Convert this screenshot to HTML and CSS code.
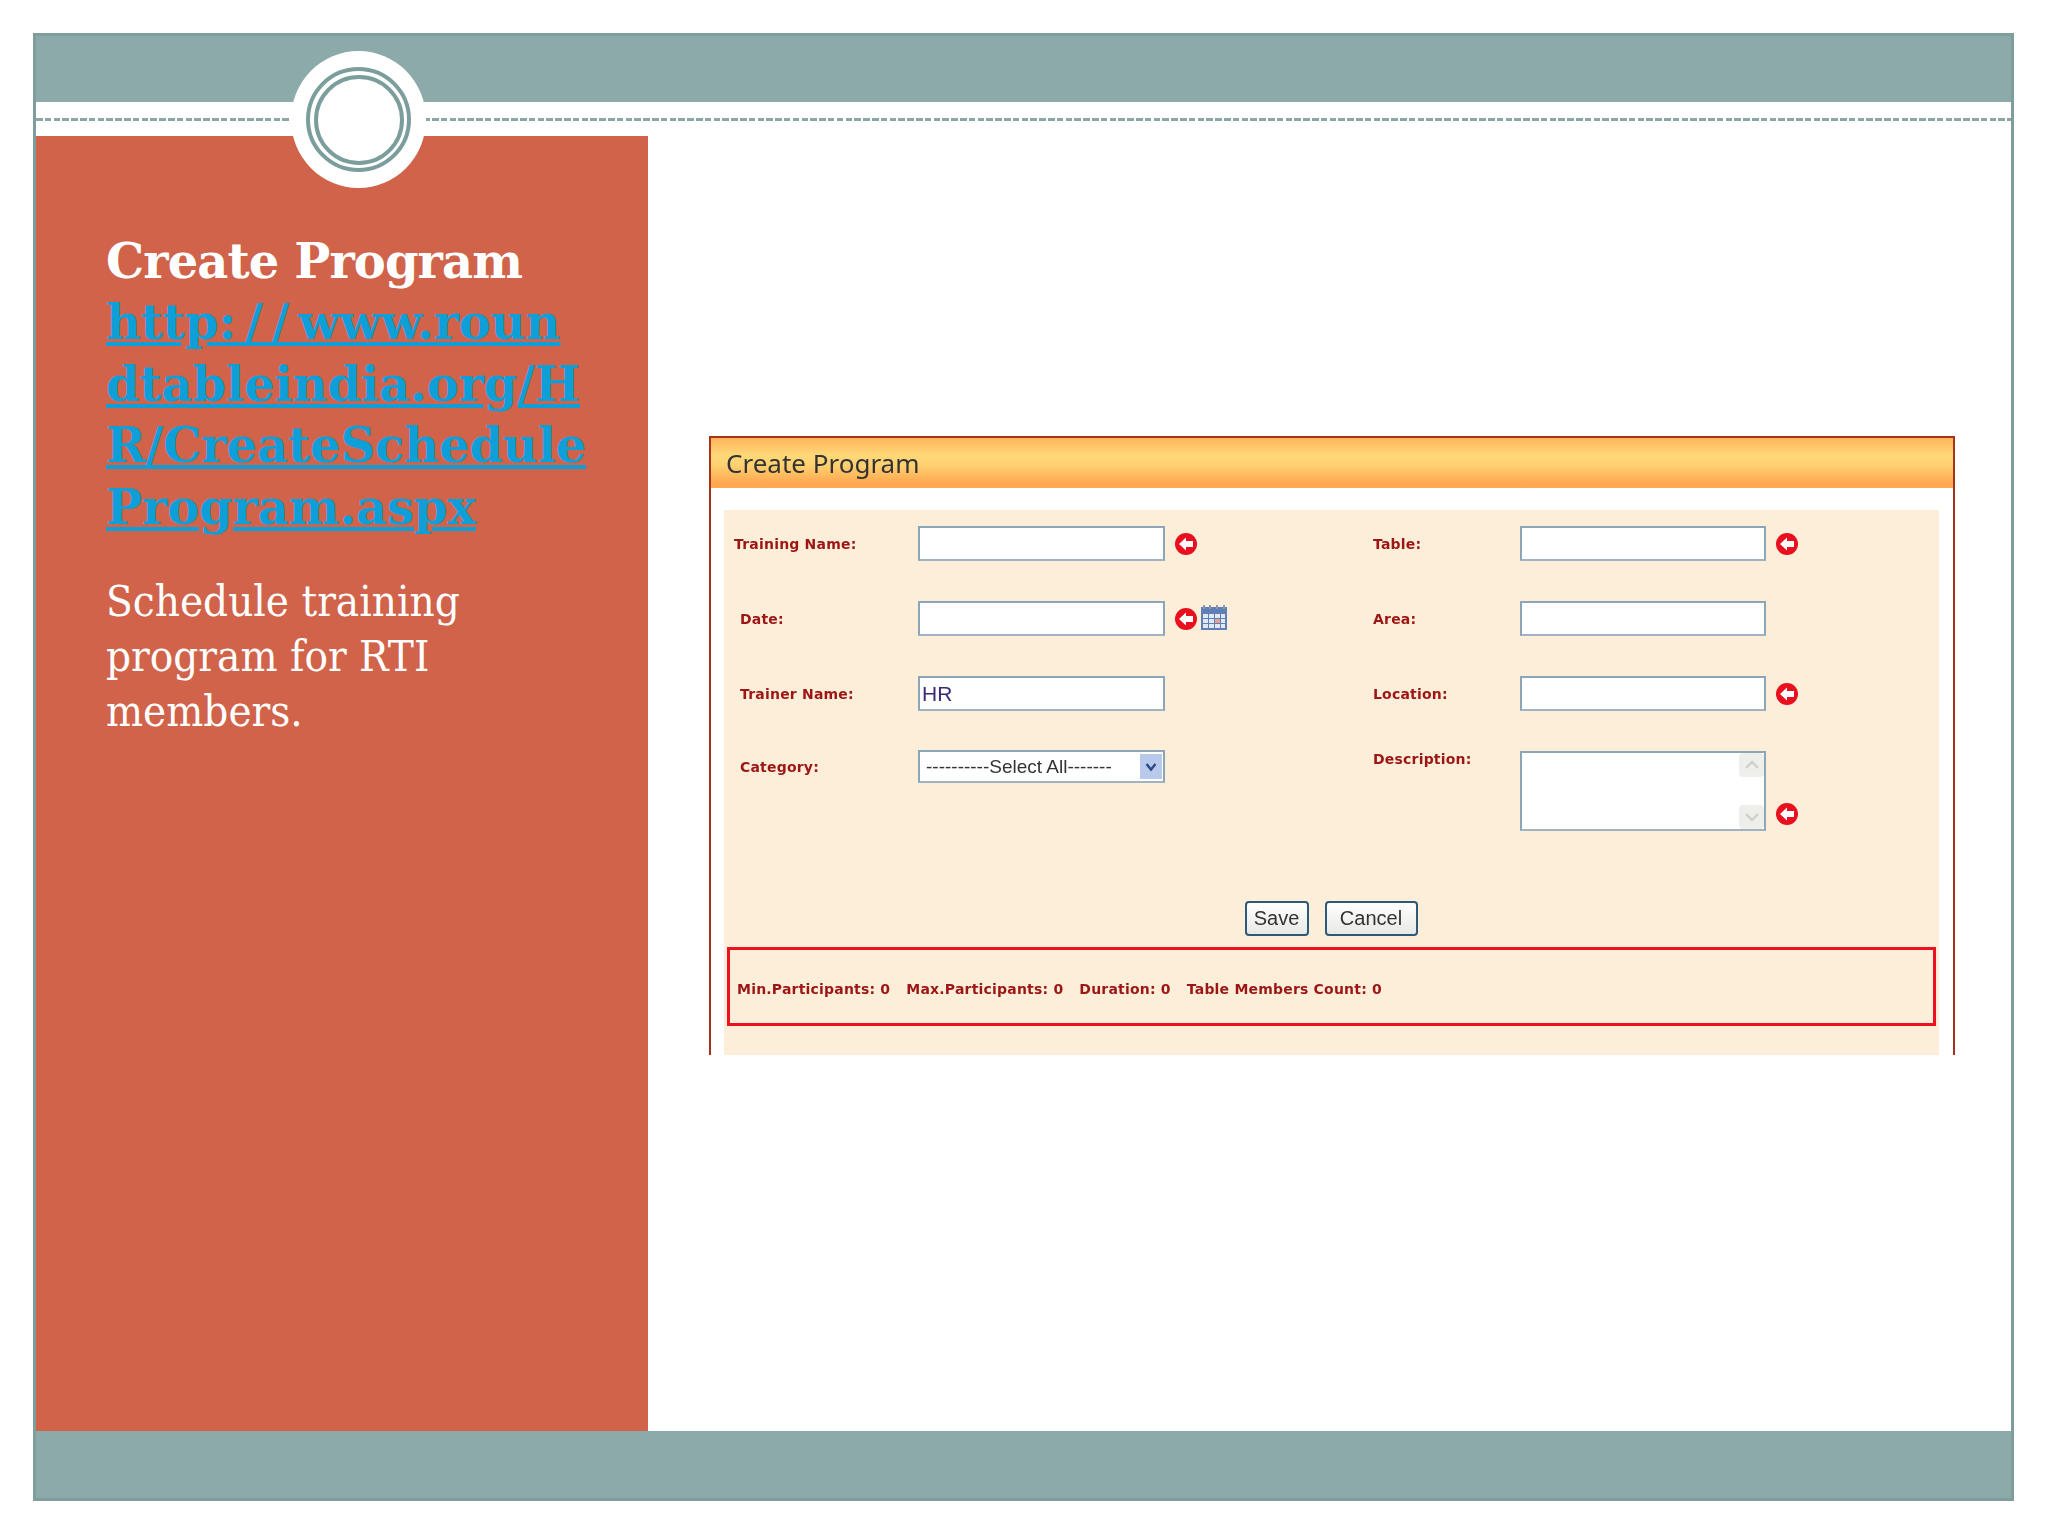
FILE: index.html
```html
<!DOCTYPE html>
<html lang="en">
<head>
    <meta charset="UTF-8">
    <title>Create Program</title>
    <link rel="stylesheet" href="styles.css">
</head>
<body>
    <div class="slide">
        <div class="top-bar"></div>
        <div class="dash-band"><div class="dash-line"></div></div>

        <div class="ring-badge">
            <div class="ring-outer"><div class="ring-inner"></div></div>
        </div>

        <div class="main">
            <div class="side">
                <h1 class="side-title">Create Program<br>
                    <a class="side-link" href="#">http<span class="link-slashes">://</span>www.roun<br>dtableindia.org/H<br>R/CreateSchedule<br>Program.aspx</a>
                </h1>
                <p class="side-text">Schedule training<br>program for RTI<br>members.</p>
            </div>

            <div class="content">
                <div class="panel">
                    <div class="panel-header">Create Program</div>
                    <div class="panel-body">
                        <div class="form-grid">
                            <div class="label wide">Training Name:</div>
                            <div class="field"></div>
                            <div class="marks"><svg class="req-icon" viewBox="0 0 22 22"><use href="#req"/></svg></div>
                            <div class="label">Table:</div>
                            <div class="field"></div>
                            <div class="marks"><svg class="req-icon" viewBox="0 0 22 22"><use href="#req"/></svg></div>

                            <div class="label inset">Date:</div>
                            <div class="field"></div>
                            <div class="marks">
                                <svg class="req-icon" viewBox="0 0 22 22"><use href="#req"/></svg>
                                <svg class="cal-icon" viewBox="0 0 26 25">
                                    <rect x="0" y="2" width="26" height="23" fill="#5f7fb5"/>
                                    <rect x="2" y="0" width="2" height="4" fill="#8a99ad"/>
                                    <rect x="8" y="0" width="2" height="4" fill="#8a99ad"/>
                                    <rect x="15" y="0" width="2" height="4" fill="#8a99ad"/>
                                    <rect x="22" y="0" width="2" height="4" fill="#8a99ad"/>
                                    <rect x="2" y="9" width="5" height="4" fill="#dfe8f5"/>
                                    <rect x="8" y="9" width="5" height="4" fill="#dfe8f5"/>
                                    <rect x="14" y="9" width="5" height="4" fill="#dfe8f5"/>
                                    <rect x="20" y="9" width="4" height="4" fill="#dfe8f5"/>
                                    <rect x="2" y="14" width="5" height="4" fill="#dfe8f5"/>
                                    <rect x="8" y="14" width="5" height="4" fill="#dfe8f5"/>
                                    <rect x="14" y="14" width="5" height="4" fill="#e9a08c"/>
                                    <rect x="20" y="14" width="4" height="4" fill="#dfe8f5"/>
                                    <rect x="2" y="19" width="5" height="4" fill="#dfe8f5"/>
                                    <rect x="8" y="19" width="5" height="4" fill="#dfe8f5"/>
                                    <rect x="14" y="19" width="5" height="4" fill="#dfe8f5"/>
                                    <rect x="20" y="19" width="4" height="4" fill="#dfe8f5"/>
                                </svg>
                            </div>
                            <div class="label">Area:</div>
                            <div class="field"></div>
                            <div class="marks"></div>

                            <div class="label inset">Trainer Name:</div>
                            <div class="field field-value">HR</div>
                            <div class="marks"></div>
                            <div class="label">Location:</div>
                            <div class="field"></div>
                            <div class="marks"><svg class="req-icon" viewBox="0 0 22 22"><use href="#req"/></svg></div>

                            <div class="label inset label-category">Category:</div>
                            <div class="field select-box">
                                <span class="select-text">----------Select All-------</span>
                                <span class="select-arrow">
                                    <svg viewBox="0 0 12 10" width="12" height="10"><path d="M1.5 2 L6 7.5 L10.5 2" fill="none" stroke="#2c4a86" stroke-width="2.4"/></svg>
                                </span>
                            </div>
                            <div class="marks"></div>
                            <div class="label label-top">Description:</div>
                            <div class="field text-area">
                                <div class="scroll-bar">
                                    <span class="scroll-btn">
                                        <svg viewBox="0 0 16 10" width="16" height="10"><path d="M2 8 L8 2 L14 8" fill="none" stroke="#cfd0c8" stroke-width="2.4"/></svg>
                                    </span>
                                    <span class="scroll-btn">
                                        <svg viewBox="0 0 16 10" width="16" height="10"><path d="M2 2 L8 8 L14 2" fill="none" stroke="#cfd0c8" stroke-width="2.4"/></svg>
                                    </span>
                                </div>
                            </div>
                            <div class="marks marks-end"><svg class="req-icon" viewBox="0 0 22 22"><use href="#req"/></svg></div>
                        </div>

                        <div class="buttons">
                            <button class="btn btn-save">Save</button>
                            <button class="btn btn-cancel">Cancel</button>
                        </div>

                        <div class="summary">
                            <span>Min.Participants: 0</span>
                            <span>Max.Participants: 0</span>
                            <span>Duration: 0</span>
                            <span>Table Members Count: 0</span>
                        </div>
                    </div>
                </div>
            </div>
        </div>

        <div class="bottom-bar"></div>
    </div>

    <svg class="icon-defs" width="0" height="0">
        <symbol id="req" viewBox="0 0 22 22">
            <circle cx="11" cy="11" r="11" fill="#e8101f"/>
            <path d="M4 11 L11 4.5 L11 8 L18 8 L18 14 L11 14 L11 17.5 Z" fill="#fff"/>
        </symbol>
    </svg>
</body>
</html>
```

FILE: styles.css
```css
* {
    margin: 0;
    padding: 0;
    box-sizing: border-box;
}

body {
    background-color: #fff;
    width: 2048px;
    height: 1536px;
    padding: 33px 34px 35px 33px;
    font-family: "Liberation Sans", Arial, sans-serif;
    overflow: hidden;
}

.slide {
    position: relative;
    height: 100%;
    display: flex;
    flex-direction: column;
    border: 3px solid #7f9d9c;
}

.top-bar {
    height: 66px;
    background-color: #8caaa9;
}

.bottom-bar {
    height: 67px;
    background-color: #8caaa9;
}

.dash-band {
    height: 34px;
    padding-top: 16px;
}

.dash-line {
    height: 3px;
    background-image: repeating-linear-gradient(to right, #8aa5a4 0, #8aa5a4 6.5px, transparent 6.5px, transparent 8.8px);
}

/* circle sits over the bars */
.ring-badge {
    position: absolute;
    left: 255px;
    top: 15px;
    width: 135px;
    height: 137px;
    border-radius: 50%;
    background-color: #fff;
    display: flex;
    align-items: center;
    justify-content: center;
}

.ring-outer {
    width: 105px;
    height: 105px;
    border-radius: 50%;
    border: 4px solid #7b9e9c;
    display: flex;
    align-items: center;
    justify-content: center;
}

.ring-inner {
    width: 90px;
    height: 90px;
    border-radius: 50%;
    border: 4px solid #7b9e9c;
}

.main {
    flex: 1;
    display: flex;
}

.side {
    width: 612px;
    background-color: #d0634a;
    padding: 95px 20px 0 70px;
    color: #fff;
    font-family: "DejaVu Serif", "Liberation Serif", serif;
}

.side-title {
    font-size: 48px;
    line-height: 61.4px;
    font-weight: bold;
    letter-spacing: -0.9px;
}

.side-link {
    color: #0f9fd8;
    letter-spacing: -0.1px;
}

.link-slashes {
    letter-spacing: 9px;
}

.side-text {
    margin-top: 36px;
    font-size: 43.5px;
    font-stretch: condensed;
    line-height: 55px;
}

.content {
    flex: 1;
    padding: 300px 0 0 61px;
}

.panel {
    width: 1246px;
    height: 619px;
    display: flex;
    flex-direction: column;
    border-left: 2px solid #a8331a;
    border-right: 2px solid #a8331a;
    border-top: 2px solid #a8331a;
    filter: blur(0.5px);
}

.panel-header {
    height: 50px;
    padding-left: 15px;
    display: flex;
    align-items: center;
    font-family: "Noto Sans", sans-serif;
    font-size: 26px;
    color: #333;
    background: linear-gradient(to bottom, #ffb45c 0%, #ffd878 35%, #ffd070 55%, #ffa850 90%, #ffa850 100%);
}

.panel-body {
    flex: 1;
    margin: 22px 14px 0 13px;
    padding-top: 16px;
    background-color: #fdeed9;
}

.form-grid {
    display: grid;
    grid-template-columns: 194px 247px 208px 147px 246px 1fr;
    grid-template-rows: 35px 35px 35px auto;
    row-gap: 40px;
}

.label {
    font-family: "DejaVu Sans", sans-serif;
    font-size: 14px;
    font-weight: bold;
    letter-spacing: 0.2px;
    color: #9c1616;
    display: flex;
    align-items: center;
}

.label.wide {
    padding-left: 10px;
}

.label.inset {
    padding-left: 16px;
}

.label-top {
    align-items: flex-start;
}

.label-category {
    align-items: flex-start;
    padding-top: 8px;
}

.field {
    background-color: #fff;
    border: 2px solid #8ba6b8;
    border-bottom-color: #9fb3c2;
    height: 35px;
}

.field-value {
    display: flex;
    align-items: center;
    padding-left: 2px;
    font-size: 21px;
    color: #3c2a78;
}

.marks {
    display: flex;
    align-items: center;
    gap: 4px;
    padding-left: 10px;
}

.marks-end {
    align-items: flex-end;
    padding-bottom: 6px;
}

.req-icon {
    width: 22px;
    height: 22px;
}

.cal-icon {
    width: 26px;
    height: 25px;
    margin-top: -3px;
}

.select-box {
    display: flex;
    align-items: center;
    justify-content: space-between;
    height: 33px;
    margin-top: -1px;
    padding: 2px 1px 2px 6px;
    font-size: 19px;
    color: #333;
}

.select-arrow {
    width: 22px;
    height: 100%;
    background-color: #b8c9ec;
    display: flex;
    align-items: center;
    justify-content: center;
}

.text-area {
    height: 80px;
    display: flex;
    justify-content: flex-end;
}

.scroll-bar {
    width: 25px;
    display: flex;
    flex-direction: column;
    justify-content: space-between;
}

.scroll-btn {
    height: 24px;
    background-color: #eeeeea;
    border-radius: 4px;
    display: flex;
    align-items: center;
    justify-content: center;
}

.buttons {
    display: flex;
    justify-content: center;
    gap: 16px;
    margin: 70px 0 0 -1px;
}

.btn {
    height: 35px;
    font-family: "Liberation Sans", Arial, sans-serif;
    font-size: 20px;
    color: #333;
    background: linear-gradient(to bottom, #fff, #e8e8e4);
    border: 2px solid #2d5a78;
    border-radius: 4px;
}

.btn-save {
    width: 64px;
}

.btn-cancel {
    width: 93px;
}

.summary {
    height: 79px;
    margin: 11px 3px 0 3px;
    padding: 4px 0 0 7px;
    display: flex;
    align-items: center;
    gap: 16px;
    border: 3px solid #ee1122;
    font-family: "DejaVu Sans", sans-serif;
    font-size: 14px;
    font-weight: bold;
    letter-spacing: 0.2px;
    color: #9c1616;
}

.icon-defs {
    position: absolute;
}
```
